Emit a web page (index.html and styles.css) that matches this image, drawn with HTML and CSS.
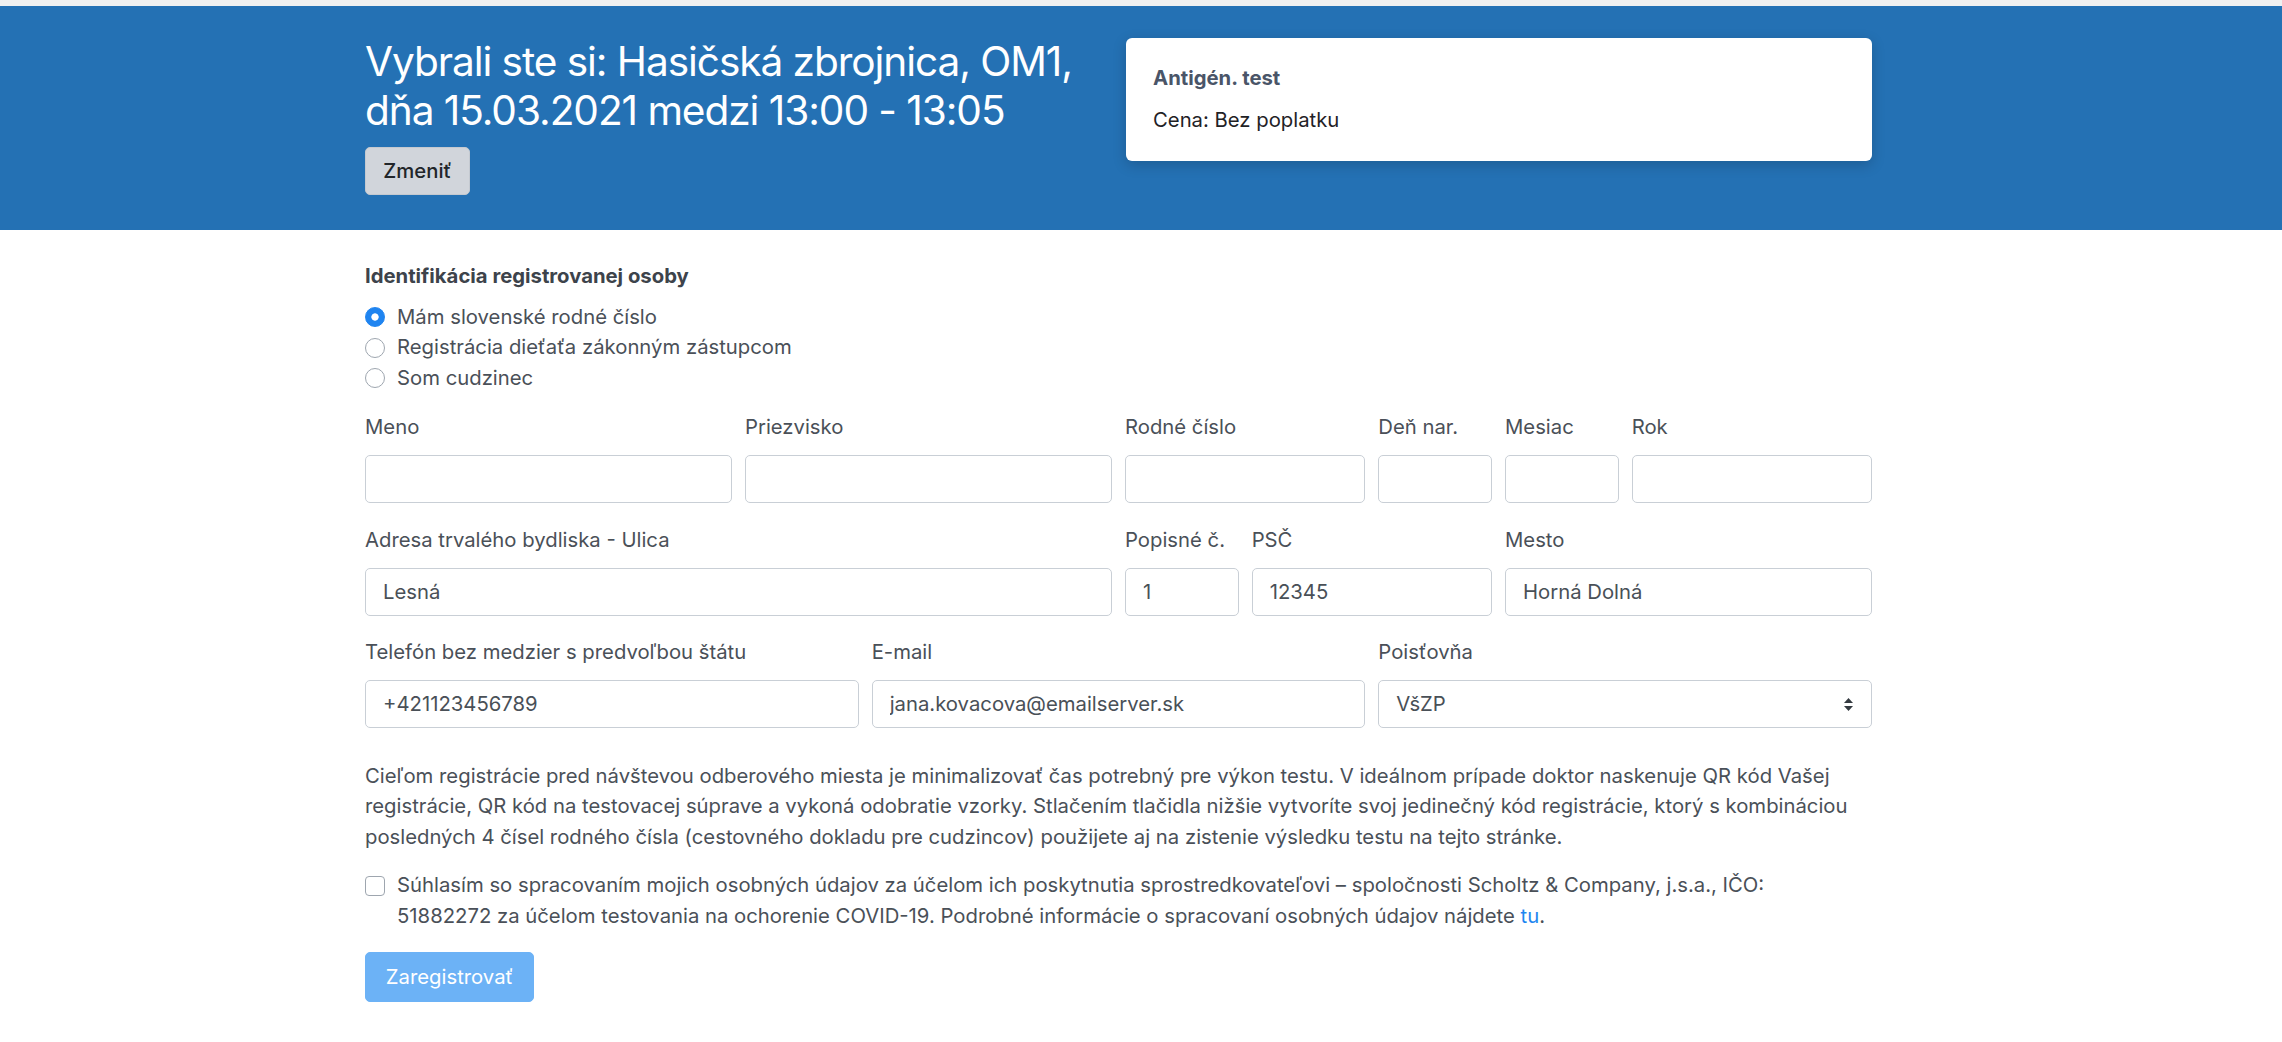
FILE: index.html
```html
<!DOCTYPE html>
<html lang="sk">
<head>
<meta charset="utf-8">
<title>Registrácia</title>
<link rel="stylesheet" href="styles.css">
</head>
<body>
<header class="hero">
  <div class="container hero-grid">
    <div class="hero-left">
      <h2 class="hero-title">Vybrali ste si: Hasičská zbrojnica, OM1, dňa 15.03.2021 medzi 13:00 - 13:05</h2>
      <button class="btn btn-grey" type="button">Zmeniť</button>
    </div>
    <div class="card">
      <div class="card-title">Antigén. test</div>
      <div class="card-text">Cena: Bez poplatku</div>
    </div>
  </div>
</header>

<main class="container form-area">
  <div class="section-title">Identifikácia registrovanej osoby</div>
  <div class="radios">
    <label class="radio-row"><input type="radio" name="id" checked><span>Mám slovenské rodné číslo</span></label>
    <label class="radio-row"><input type="radio" name="id"><span>Registrácia dieťaťa zákonným zástupcom</span></label>
    <label class="radio-row"><input type="radio" name="id"><span>Som cudzinec</span></label>
  </div>

  <div class="form-grid">
    <div class="field span-3"><label>Meno</label><input class="input" type="text"></div>
    <div class="field span-3"><label>Priezvisko</label><input class="input" type="text"></div>
    <div class="field span-2"><label>Rodné číslo</label><input class="input" type="text"></div>
    <div class="field span-1"><label>Deň nar.</label><input class="input" type="text"></div>
    <div class="field span-1"><label>Mesiac</label><input class="input" type="text"></div>
    <div class="field span-2"><label>Rok</label><input class="input" type="text"></div>

    <div class="field span-6"><label>Adresa trvalého bydliska - Ulica</label><input class="input" type="text" value="Lesná"></div>
    <div class="field span-1"><label>Popisné č.</label><input class="input" type="text" value="1"></div>
    <div class="field span-2"><label>PSČ</label><input class="input" type="text" value="12345"></div>
    <div class="field span-3"><label>Mesto</label><input class="input" type="text" value="Horná Dolná"></div>

    <div class="field span-4"><label>Telefón bez medzier s predvoľbou štátu</label><input class="input" type="text" value="+421123456789"></div>
    <div class="field span-4"><label>E-mail</label><input class="input" type="text" value="jana.kovacova@emailserver.sk"></div>
    <div class="field span-4"><label>Poisťovňa</label>
      <div class="select-wrap">
        <select class="input select"><option>VšZP</option></select>
        <svg class="select-arrow" width="11" height="15" viewBox="0 0 11 15"><path d="M5.5 1 L10 6 H1 Z" fill="#343a40"/><path d="M5.5 14 L10 9 H1 Z" fill="#343a40"/></svg>
      </div>
    </div>
  </div>

  <p class="info">Cieľom registrácie pred návštevou odberového miesta je minimalizovať čas potrebný pre výkon testu. V ideálnom prípade doktor naskenuje QR kód Vašej registrácie, QR kód na testovacej súprave a vykoná odobratie vzorky. Stlačením tlačidla nižšie vytvoríte svoj jedinečný kód registrácie, ktorý s kombináciou posledných 4 čísel rodného čísla (cestovného dokladu pre cudzincov) použijete aj na zistenie výsledku testu na tejto stránke.</p>

  <label class="consent"><input type="checkbox"><span class="consent-text">Súhlasím so spracovaním mojich osobných údajov za účelom ich poskytnutia sprostredkovateľovi – spoločnosti Scholtz &amp; Company, j.s.a., IČO: 51882272 za účelom testovania na ochorenie COVID-19. Podrobné informácie o spracovaní osobných údajov nájdete <a href="#">tu</a>.</span></label>

  <button class="btn btn-primary" type="button">Zaregistrovať</button>
</main>
</body>
</html>
```

FILE: styles.css
```css
html { font-size: 20.3px; }
body {
  margin: 0;
  font-family: "Inter", "Noto Sans", sans-serif;
  font-size: 1rem;
  line-height: 1.5;
  color: #212529;
  background: #fff;
}
.container {
  width: 1507px;
  margin-left: 365px;
}
.hero {
  background: #2471b4;
  border-top: 6px solid #f0f0f0;
  padding: 32px 0 35px;
}
.hero-grid {
  display: grid;
  grid-template-columns: 1fr 1fr;
  column-gap: 15px;
  align-items: start;
}
.hero-title {
  margin: 0 0 12px;
  color: #fff;
  font-weight: 400;
  font-size: 40.6px;
  line-height: 1.2;
  letter-spacing: -0.026em;
}
.btn {
  font-family: inherit;
  font-size: 1rem;
  line-height: 1.5;
  height: 48px;
  padding: 0 16px;
  border-radius: 5px;
  cursor: pointer;
}
.btn-grey {
  background: #d1d5db;
  border: 1px solid #c4c9d0;
  color: #212529;
  font-weight: 500;
  min-width: 105px;
}
.btn-primary {
  background: #6cb2f6;
  border: 1px solid #6cb2f6;
  color: #fff;
  width: 169px;
  height: 50px;
}
.card {
  background: #fff;
  border-radius: 6px;
  box-shadow: 0 4px 14px rgba(0, 0, 0, 0.18);
  padding: 25px 27px;
}
.card-title {
  font-weight: 700;
  color: #4a5568;
  margin-bottom: 12px;
}
.card-text { color: #1f2226; }

.form-area { padding-top: 31px; }
.section-title {
  font-weight: 700;
  color: #3d434b;
  margin-bottom: 10px;
}
.radios {
  display: flex;
  flex-direction: column;
  margin-bottom: 19px;
}
.radio-row {
  display: flex;
  align-items: center;
  gap: 12px;
  color: #4a5058;
}
.radio-row input {
  appearance: none;
  -webkit-appearance: none;
  margin: 0;
  width: 20px;
  height: 20px;
  border: 1px solid #9ea6af;
  border-radius: 50%;
  background: #fff;
  flex: none;
}
.radio-row input:checked {
  border-color: #1f84f0;
  background: radial-gradient(circle, #fff 0, #fff 3.3px, #1f84f0 4px);
}
.form-grid {
  display: grid;
  grid-template-columns: repeat(12, 1fr);
  column-gap: 13px;
  row-gap: 21.5px;
}
.span-1 { grid-column: span 1; }
.span-2 { grid-column: span 2; }
.span-3 { grid-column: span 3; }
.span-4 { grid-column: span 4; }
.span-6 { grid-column: span 6; }
.field {
  display: flex;
  flex-direction: column;
  min-width: 0;
}
.field label {
  display: block;
  color: #4a5058;
  white-space: nowrap;
  margin-bottom: 12.5px;
}
.input {
  box-sizing: border-box;
  width: 100%;
  height: 48px;
  padding: 0 17px;
  font-family: inherit;
  font-size: 1rem;
  color: #495057;
  background: #fff;
  border: 1px solid #c9cfd6;
  border-radius: 5px;
  outline: none;
}
.select-wrap { position: relative; }
.select {
  appearance: none;
  -webkit-appearance: none;
}
.select-arrow {
  position: absolute;
  right: 18px;
  top: 17px;
}
.info {
  margin: 33px 0 18px;
  color: #4a5058;
}
.consent {
  display: flex;
  align-items: flex-start;
  gap: 12px;
  color: #4a5058;
  margin-bottom: 21px;
}
.consent-text { max-width: 1420px; }
.consent input {
  appearance: none;
  -webkit-appearance: none;
  margin: 6px 0 0 0;
  width: 20px;
  height: 20px;
  border: 1px solid #9ea6af;
  border-radius: 4px;
  background: #fff;
  flex: none;
}
.consent a {
  color: #1e86f0;
  text-decoration: none;
}
```
